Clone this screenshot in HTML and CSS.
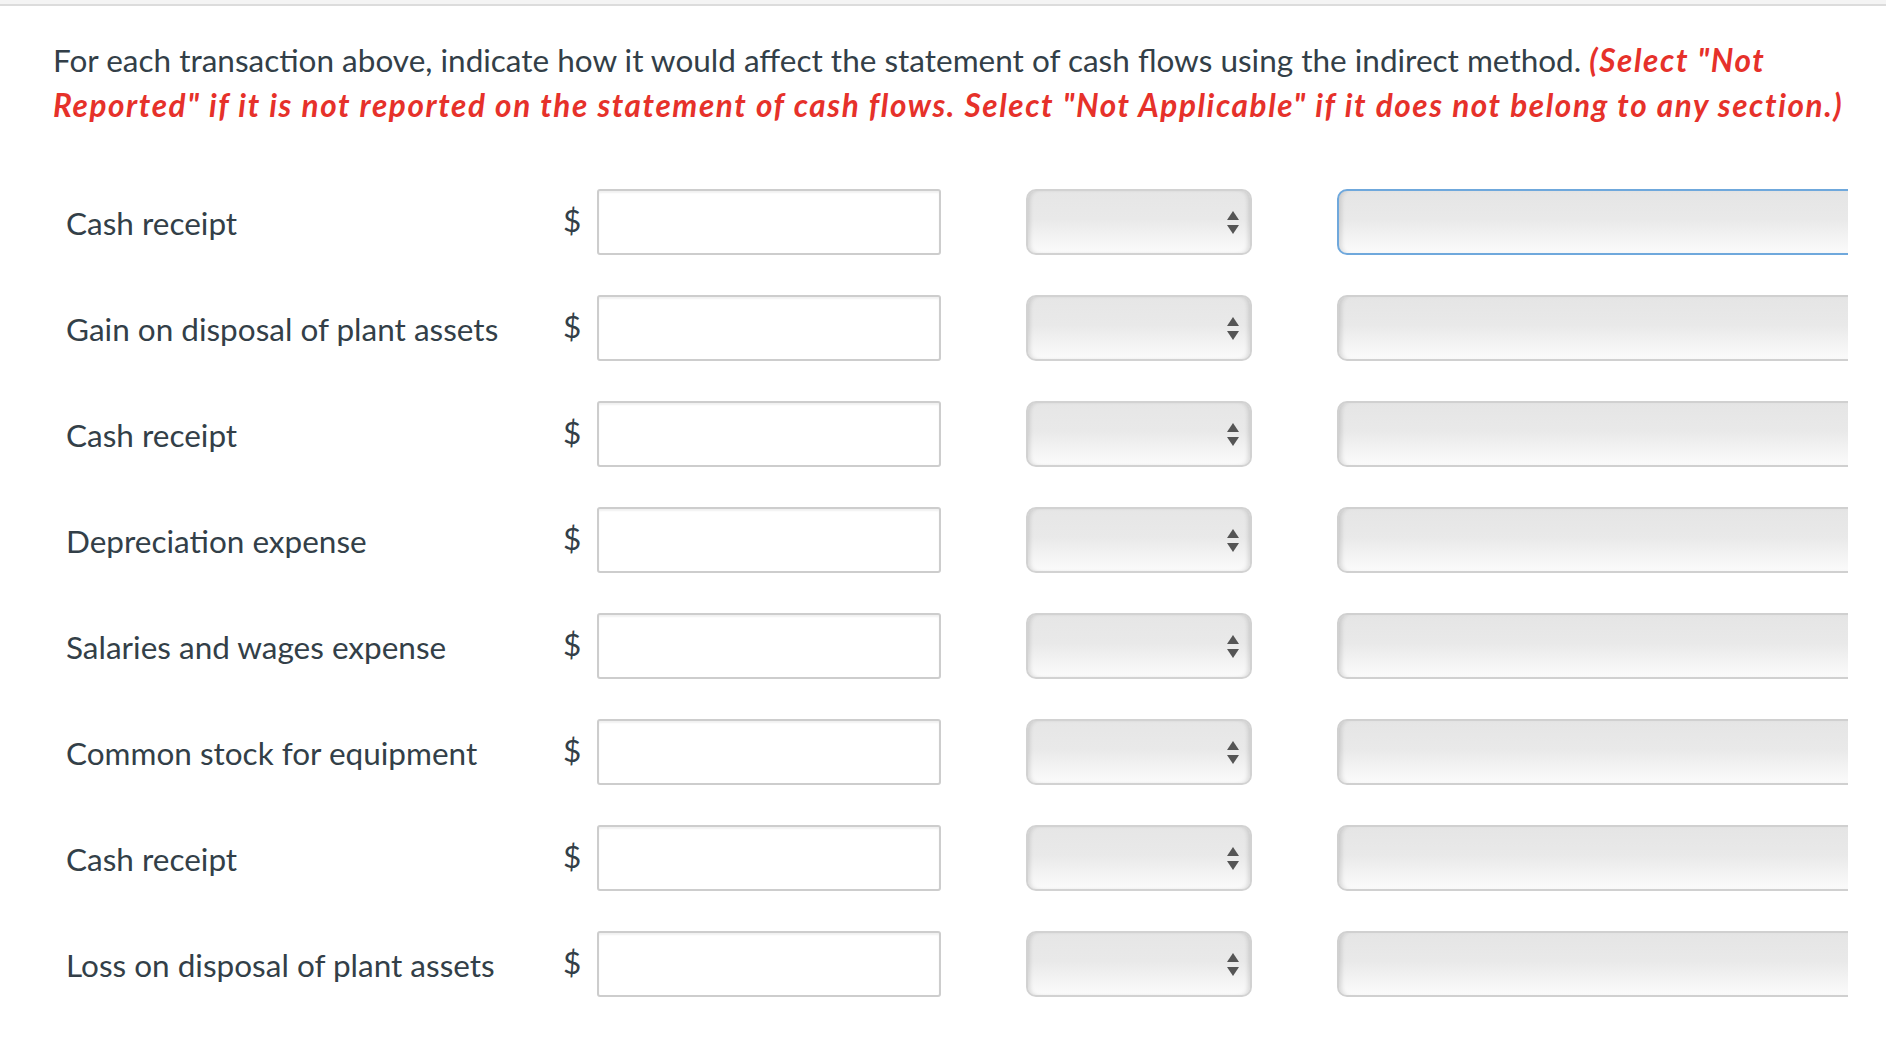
FILE: index.html
```html
<!DOCTYPE html>
<html>
<head>
<meta charset="utf-8">
<link rel="stylesheet" href="styles.css">
</head>
<body>
<div class="topbar"></div>
<div class="qa">
  <p class="instr">For each transaction above, indicate how it would affect the statement of cash flows using the indirect method. <em class="note">(Select "Not Reported" if it is not reported on the statement of cash flows. Select "Not Applicable" if it does not belong to any section.)</em></p>
  <div class="rows">
    <div class="row"><span class="label">Cash receipt</span><span class="cur">$</span><span class="input"></span><span class="select"><span class="arrows"><i class="up"></i><i class="down"></i></span></span><span class="wide focus"></span></div>
    <div class="row"><span class="label">Gain on disposal of plant assets</span><span class="cur">$</span><span class="input"></span><span class="select"><span class="arrows"><i class="up"></i><i class="down"></i></span></span><span class="wide"></span></div>
    <div class="row"><span class="label">Cash receipt</span><span class="cur">$</span><span class="input"></span><span class="select"><span class="arrows"><i class="up"></i><i class="down"></i></span></span><span class="wide"></span></div>
    <div class="row"><span class="label">Depreciation expense</span><span class="cur">$</span><span class="input"></span><span class="select"><span class="arrows"><i class="up"></i><i class="down"></i></span></span><span class="wide"></span></div>
    <div class="row"><span class="label">Salaries and wages expense</span><span class="cur">$</span><span class="input"></span><span class="select"><span class="arrows"><i class="up"></i><i class="down"></i></span></span><span class="wide"></span></div>
    <div class="row"><span class="label">Common stock for equipment</span><span class="cur">$</span><span class="input"></span><span class="select"><span class="arrows"><i class="up"></i><i class="down"></i></span></span><span class="wide"></span></div>
    <div class="row"><span class="label">Cash receipt</span><span class="cur">$</span><span class="input"></span><span class="select"><span class="arrows"><i class="up"></i><i class="down"></i></span></span><span class="wide"></span></div>
    <div class="row"><span class="label">Loss on disposal of plant assets</span><span class="cur">$</span><span class="input"></span><span class="select"><span class="arrows"><i class="up"></i><i class="down"></i></span></span><span class="wide"></span></div>
  </div>
</div>
</body>
</html>
```
FILE: styles.css
```css
html, body {
  margin: 0;
  padding: 0;
  background: #fff;
}
body {
  font-family: Lato, "Open Sans", sans-serif;
  color: #333f48;
  font-size: 31.5px;
}
.topbar {
  height: 4px;
  background: #f4f4f4;
  border-bottom: 2px solid #dcdcdc;
}
.qa {
  margin-left: 53px;
  width: 1795px;
  overflow: hidden;
}
.instr {
  margin: 32px 0 0;
  line-height: 44.6px;
  font-size: 31.5px;
}
.note {
  color: #e6312a;
  font-weight: 700;
  font-style: italic;
  letter-spacing: 1.6px;
}
.rows {
  margin-top: 62px;
  padding-bottom: 40px;
}
.row {
  display: flex;
  align-items: center;
  height: 66px;
  margin-bottom: 40px;
  padding-left: 13px;
}
.label {
  width: 497px;
  flex: none;
  line-height: 1;
  padding-top: 4px;
}
.cur {
  width: 34px;
  flex: none;
  line-height: 1;
  margin-top: -3px;
}
.input {
  flex: none;
  box-sizing: border-box;
  width: 344px;
  height: 66px;
  background: #fff;
  border: 2px solid #cdcdcd;
  border-radius: 3px;
  box-shadow: inset 0 2px 2px rgba(0, 0, 0, 0.06);
}
.select {
  flex: none;
  box-sizing: border-box;
  width: 226px;
  height: 66px;
  margin-left: 85px;
  border: 2px solid #d2d2d2;
  border-radius: 10px;
  background: linear-gradient(#e6e6e6, #e9e9e9 45%, #fbfbfb);
  box-shadow: inset 4px 0 4px -2px rgba(0, 0, 0, 0.12), inset -4px 0 4px -2px rgba(0, 0, 0, 0.12);
  display: flex;
  align-items: center;
  justify-content: flex-end;
  padding-right: 11px;
}
.arrows {
  display: flex;
  flex-direction: column;
  align-items: center;
  gap: 5px;
}
.arrows i {
  display: block;
  width: 0;
  height: 0;
  border-left: 6.5px solid transparent;
  border-right: 6.5px solid transparent;
}
.arrows .up {
  border-bottom: 9px solid #555;
}
.arrows .down {
  border-top: 9px solid #555;
}
.wide {
  flex: none;
  box-sizing: border-box;
  width: 620px;
  height: 66px;
  margin-left: 85px;
  border: 2px solid #d0d0d0;
  border-radius: 10px;
  background: linear-gradient(#e5e5e5, #e9e9e9 45%, #fbfbfb);
  box-shadow: inset 5px 0 5px -3px rgba(0, 0, 0, 0.14);
}
.wide.focus {
  border-color: #6fa8dc;
}
```
